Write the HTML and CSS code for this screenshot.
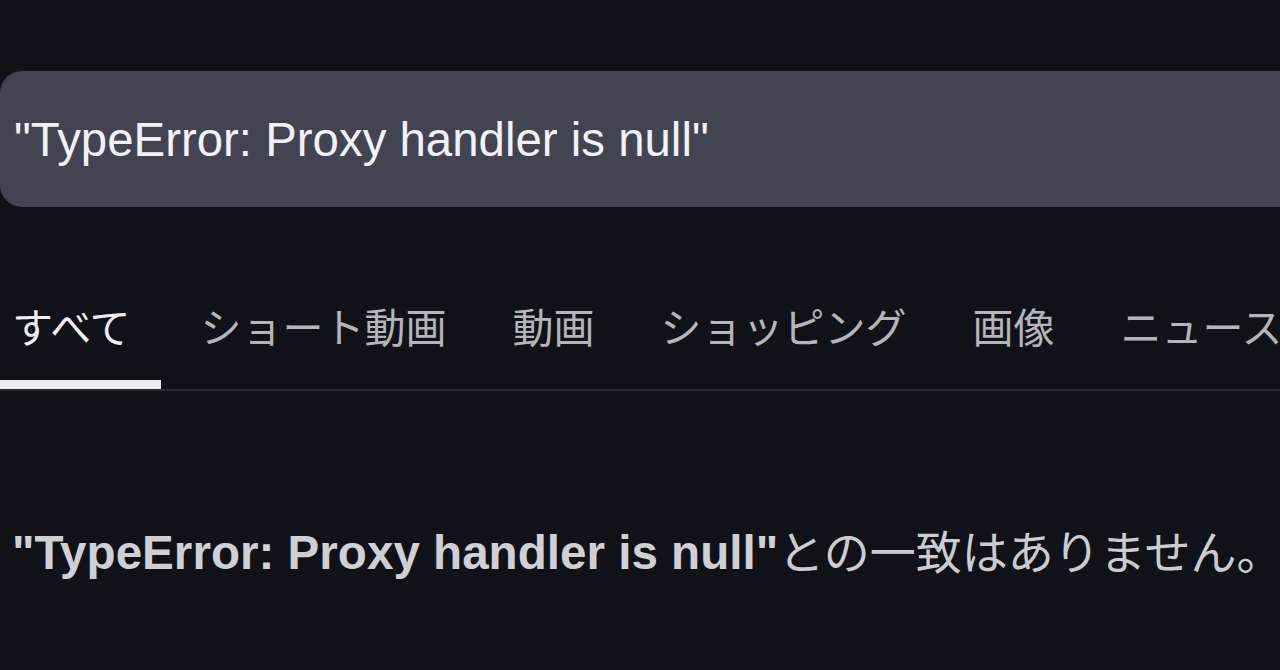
FILE: index.html
```html
<!DOCTYPE html>
<html lang="ja">
<head>
<meta charset="utf-8">
<title>TypeError: Proxy handler is null</title>
<link rel="stylesheet" href="styles.css">
</head>
<body>
<div class="page">
  <div class="searchbox">
    <span class="query">"TypeError: Proxy handler is null"</span>
  </div>
  <nav class="tabs">
    <div class="tab active">すべて</div>
    <div class="tab">ショート動画</div>
    <div class="tab">動画</div>
    <div class="tab">ショッピング</div>
    <div class="tab">画像</div>
    <div class="tab">ニュース</div>
  </nav>
  <p class="result"><strong>"TypeError: Proxy handler is null"</strong><span class="jp">との一致はありません。</span></p>
</div>
</body>
</html>
```

FILE: styles.css
```css
html, body {
  margin: 0;
  padding: 0;
  background: #111217;
  width: 1280px;
  height: 670px;
  overflow: hidden;
}
.page {
  font-family: "Liberation Sans", "Noto Sans CJK JP", sans-serif;
  color: #e8e9ee;
  padding-top: 71px;
}
.searchbox {
  height: 136px;
  width: 1320px;
  background: #424452;
  border-radius: 22px 0 0 22px;
  display: flex;
  align-items: center;
  padding-left: 14px;
  box-sizing: border-box;
}
.query {
  font-size: 47.4px;
  color: #f1f1f6;
  white-space: nowrap;
}
.tabs {
  margin-top: 84px;
  display: flex;
  gap: 14px;
  border-bottom: 2px solid #2a2b31;
  overflow: hidden;
  white-space: nowrap;
}
.tab {
  flex-shrink: 0;
  font-family: "Noto Sans CJK JP", sans-serif;
  font-size: 41px;
  line-height: 41px;
  padding: 14px 26px 34px 26px;
  color: #b4b5bb;
  border-bottom: 9px solid transparent;
}
.tab.active {
  padding-left: 12px;
  padding-right: 30px;
  color: #eeeef2;
  border-bottom-color: #ececef;
}
.result {
  margin: 130px 0 0 12px;
  font-size: 47.6px;
  line-height: 56px;
  white-space: nowrap;
  color: #cfd0d5;
}
.result strong {
  font-weight: 700;
}
.jp {
  font-family: "Noto Sans CJK JP", sans-serif;
  font-size: 46px;
  color: #cbccd1;
}
```
